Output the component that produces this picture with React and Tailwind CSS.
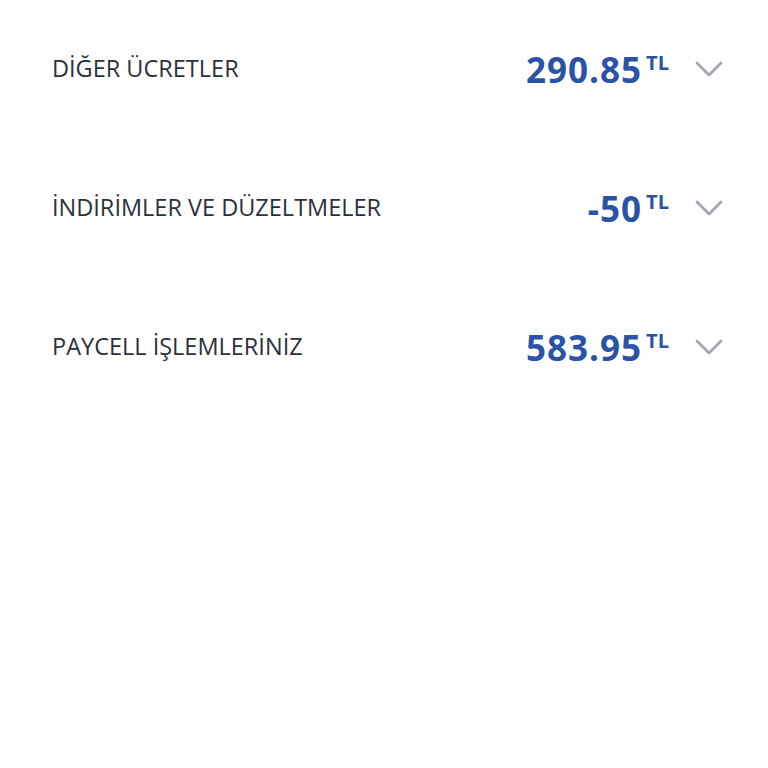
import React from "react";

const rows = [
  { label: "DİĞER ÜCRETLER", amount: "290.85" },
  { label: "İNDİRİMLER VE DÜZELTMELER", amount: "-50" },
  { label: "PAYCELL İŞLEMLERİNİZ", amount: "583.95" },
];

function Chevron() {
  return (
    <svg width="28" height="18" viewBox="0 0 28 18" fill="none">
      <path d="M2 3 L14 15 L26 3" stroke="#a0a6b2" strokeWidth="2.8" strokeLinecap="round" strokeLinejoin="round" />
    </svg>
  );
}

export default function App() {
  return (
    <div className="w-[768px] h-[768px] bg-white pl-[52px] pr-[45px]" style={{ fontFamily: '"Open Sans", "Noto Sans", sans-serif' }}>
      {rows.map((r) => (
        <div key={r.label} className="h-[139px] flex items-center justify-between">
          <div className="text-[23.5px] font-medium text-[#2b303b] mt-[-2px]">{r.label}</div>
          <div className="flex items-center">
            <div className="flex items-start">
              <span className="text-[35px] leading-none font-bold text-[#2853a6] tracking-[1px]">{r.amount}</span>
              <span className="text-[20px] leading-none font-bold text-[#2853a6] ml-[4px] mt-[1px]">TL</span>
            </div>
            <div className="ml-[26px] mt-[-2px]">
              <Chevron />
            </div>
          </div>
        </div>
      ))}
    </div>
  );
}
